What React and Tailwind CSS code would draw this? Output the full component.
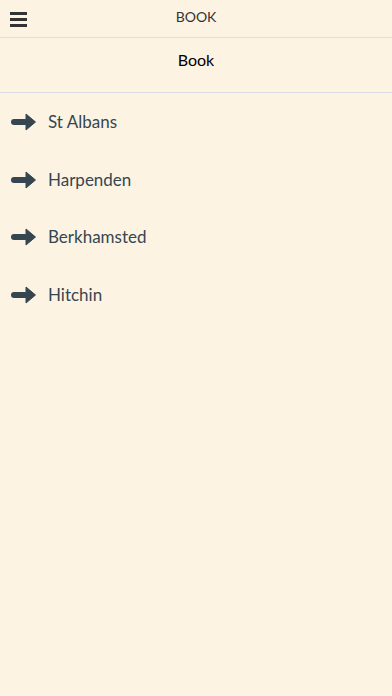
import React from 'react';

const places = ['St Albans', 'Harpenden', 'Berkhamsted', 'Hitchin'];

function Arrow() {
    return (
        <svg width="25" height="18" viewBox="0 0 25 18" className="shrink-0">
            <rect x="0" y="6" width="17" height="6" rx="3" fill="#354650" />
            <path d="M15 1 L24.5 9 L15 17 Z" fill="#354650" stroke="#354650" strokeWidth="1" strokeLinejoin="round" />
        </svg>
    );
}

export default function App() {
    return (
        <div className="min-h-screen w-full bg-[#fdf3e3] text-[#333]" style={{ fontFamily: 'Lato, "Noto Sans", sans-serif' }}>
            {/* Top bar */}
            <header className="relative h-[38px] flex items-center justify-center border-b border-[#e8dfd0]">
                <button className="absolute left-[10px] top-[12px] flex flex-col gap-[3px]">
                    <span className="block w-[17px] h-[3px] bg-[#333]" />
                    <span className="block w-[17px] h-[3px] bg-[#333]" />
                    <span className="block w-[17px] h-[3px] bg-[#333]" />
                </button>
                <span className="text-[14px] text-[#333] -mt-[5px]">BOOK</span>
            </header>

            {/* Page title */}
            <div className="h-[55px] flex items-center justify-center border-b border-[#d9dde3]">
                <span className="text-[16px] text-black -mt-[10px]">Book</span>
            </div>

            {/* Locations */}
            <ul>
                {places.map((p) => (
                    <li key={p} className="h-[57.7px] flex items-center pl-[11px]">
                        <Arrow />
                        <span className="ml-[12px] text-[17px] text-[#354650]">{p}</span>
                    </li>
                ))}
            </ul>
        </div>
    );
}
